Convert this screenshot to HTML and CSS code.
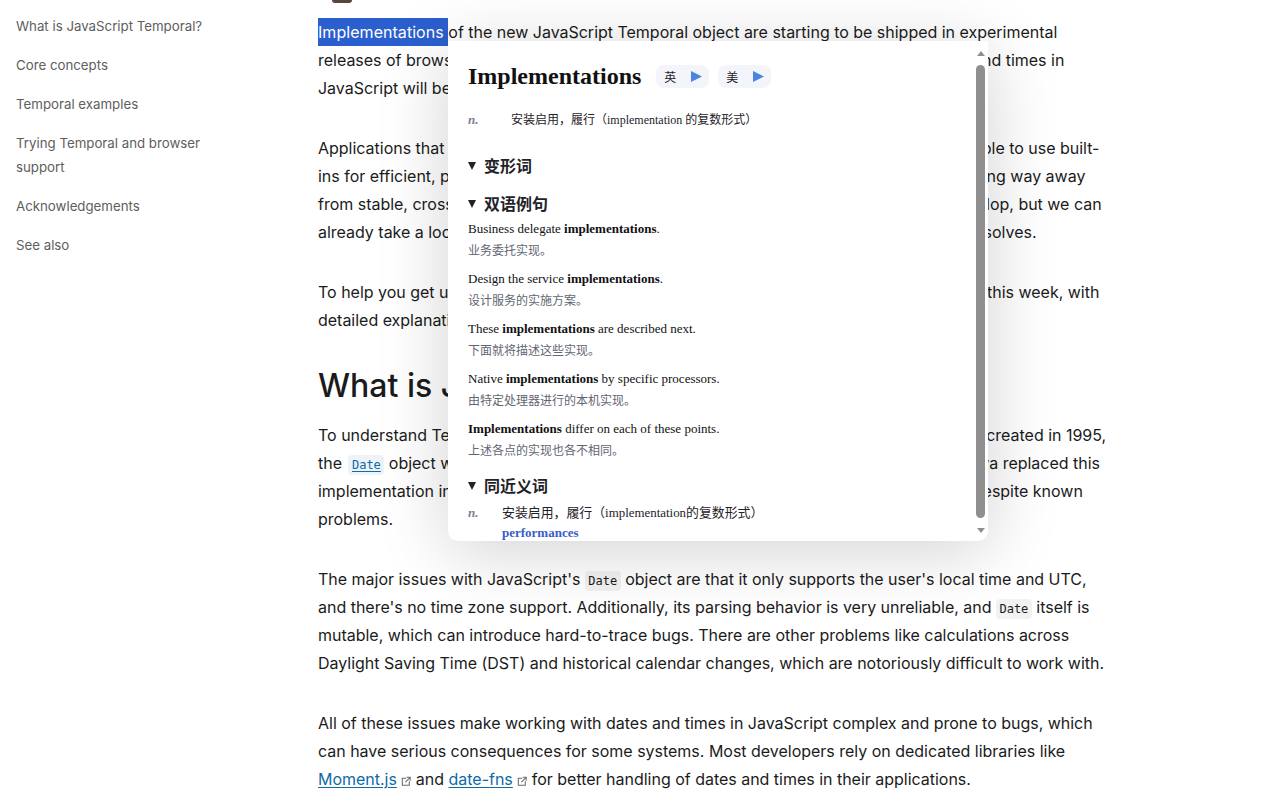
FILE: index.html
```html
<!DOCTYPE html>
<html lang="en">
<head>
<meta charset="utf-8">
<title>JavaScript Temporal is coming</title>
<link rel="stylesheet" href="styles.css">
</head>
<body>
<div class="page">
  <nav class="toc">
    <a href="#">What is JavaScript Temporal?</a>
    <a href="#">Core concepts</a>
    <a href="#">Temporal examples</a>
    <a href="#">Trying Temporal and browser support</a>
    <a href="#">Acknowledgements</a>
    <a href="#">See also</a>
  </nav>
  <main class="article">
    <div class="hero"><div class="hero-shape"></div></div>
    <p><span class="selected">Implementations </span>of the new JavaScript Temporal object are starting to be shipped in experimental releases of browsers. This is great news for web developers, since working with dates and times in JavaScript will be hugely simplified and modernized.</p>
    <p>Applications that rely on scheduling, internationalization, or time-sensitive logic will be able to use built-ins for efficient, precise and consistent dates, times, durations, and calendars. We're a long way away from stable, cross-browser support, and things can yet change as implementations develop, but we can already take a look at Temporal, as it stands today, why it's exciting, and the problems it solves.</p>
    <p>To help you get up to speed, this post covers the basic concepts that landed in our docs this week, with detailed explanations and examples.</p>
    <h2>What is JavaScript Temporal?</h2>
    <p class="after-heading">To understand Temporal, we can look at JavaScript's Date object. When JavaScript was created in 1995, the <a href="#"><code class="code-link">Date</code></a> object was faithfully copied from Java's early java.util.Date implementation. Java replaced this implementation in 1997, and JavaScript is stuck with the same API for almost 30 years, despite known problems.</p>
    <p>The major issues with JavaScript's <code>Date</code> object are that it only supports the user's local time and UTC, and there's no time zone support. Additionally, its parsing behavior is very unreliable, and <code>Date</code> itself is mutable, which can introduce hard-to-trace bugs. There are other problems like calculations across Daylight Saving Time (DST) and historical calendar changes, which are notoriously difficult to work with.</p>
    <p>All of these issues make working with dates and times in JavaScript complex and prone to bugs, which can have serious consequences for some systems. Most developers rely on dedicated libraries like <a href="#">Moment.js</a><svg class="ext" viewBox="0 0 12 12"><path d="M6 2.5H1.5v8h8V6M6.5 1.5h4v4M10.5 1.5 5 7"/></svg> and <a href="#">date-fns</a><svg class="ext" viewBox="0 0 12 12"><path d="M6 2.5H1.5v8h8V6M6.5 1.5h4v4M10.5 1.5 5 7"/></svg> for better handling of dates and times in their applications.</p>
  </main>
</div>

<aside class="popup">
  <div class="popup-body">
    <div class="word-row">
      <h1 class="word">Implementations</h1>
      <span class="pill">英<svg class="play" viewBox="0 0 11 11"><path d="M0 0 11 5.5 0 11z"/></svg></span>
      <span class="pill">美<svg class="play" viewBox="0 0 11 11"><path d="M0 0 11 5.5 0 11z"/></svg></span>
    </div>
    <div class="def def-main"><i class="pos">n.</i><span>安装启用，履行（implementation 的复数形式）</span></div>
    <h3 class="sec sec-first"><span class="tri"></span>变形词</h3>
    <h3 class="sec sec-second"><span class="tri"></span>双语例句</h3>
    <div class="ex"><div class="en">Business delegate <b>implementations</b>.</div><div class="zh">业务委托实现。</div></div>
    <div class="ex"><div class="en">Design the service <b>implementations</b>.</div><div class="zh">设计服务的实施方案。</div></div>
    <div class="ex"><div class="en">These <b>implementations</b> are described next.</div><div class="zh">下面就将描述这些实现。</div></div>
    <div class="ex"><div class="en">Native <b>implementations</b> by specific processors.</div><div class="zh">由特定处理器进行的本机实现。</div></div>
    <div class="ex"><div class="en"><b>Implementations</b> differ on each of these points.</div><div class="zh">上述各点的实现也各不相同。</div></div>
    <h3 class="sec sec-syn"><span class="tri"></span>同近义词</h3>
    <div class="def def-syn"><i class="pos">n.</i><span>安装启用，履行（implementation的复数形式）<a class="syn" href="#">performances</a></span></div>
  </div>
  <div class="scrollbar">
    <span class="arrow arrow-up"></span>
    <span class="thumb"></span>
    <span class="arrow arrow-down"></span>
  </div>
</aside>
</body>
</html>
```

FILE: styles.css
```css
* { box-sizing: border-box; }
html, body { margin: 0; height: 800px; overflow: hidden; background: #fff; }
body { font-family: Inter, "Liberation Sans", sans-serif; color: #1b1b1b; position: relative; }
.page { display: flex; align-items: flex-start; }

.toc { width: 318px; flex: none; padding: 14px 0 0 16px; display: flex; flex-direction: column; gap: 15px; }
.toc a { width: 200px; font-size: 13.28px; line-height: 24px; color: #5e5e5e; text-decoration: none; }

.article { width: 792px; flex: none; font-size: 16px; line-height: 28px; letter-spacing: -0.015px; }
.hero { height: 18px; overflow: hidden; }
.hero-shape { width: 20px; height: 3px; margin-left: 14px; background: #5b4438; border-radius: 0 0 10px 10px; }
.article p { margin: 0 0 32px; }
.article h2 { margin: 0; height: 40px; font-size: 32px; line-height: 40px; font-weight: 500; letter-spacing: 0; }
.article p.after-heading { margin-top: 15px; }
.article a { color: #0f6aa6; text-decoration: underline; text-underline-offset: 2px; }
.selected { background: #2b5fcf; color: #fff; display: inline-block; white-space: pre; letter-spacing: 0.05px; }
code { font-family: "DejaVu Sans Mono", "Liberation Mono", monospace; font-size: 12px; line-height: 1; background: #f2f2f2; border-radius: 4px; padding: 3px 3.5px; }
code.code-link { background: #eef3f7; margin-left: 2px; }
.ext { width: 10.5px; height: 10.5px; margin-left: 4px; vertical-align: -1px; fill: none; stroke: #6b6b6b; stroke-width: 1.2; }

.popup { position: absolute; left: 448px; top: 41px; width: 540px; height: 500px; background: #fff; border-radius: 0 0 10px 10px; box-shadow: 0 10px 70px rgba(0, 0, 0, .18); overflow: hidden; font-family: "Liberation Serif", "Noto Sans CJK SC", serif; color: #1f2329; }
.popup-body { padding: 21px 40px 0 20px; }
.word-row { display: flex; align-items: center; height: 28px; }
.word { margin: 0 15px 0 0; font-size: 24px; line-height: 28px; font-weight: 700; color: #111; }
.pill { display: flex; align-items: center; justify-content: space-between; width: 53px; height: 23px; margin-right: 9px; padding: 0 7px 0 8px; background: #f3f5fa; border-radius: 8px; font-family: "Noto Sans CJK SC", sans-serif; font-size: 12px; }
.play { width: 11px; height: 11px; fill: #4a86e0; }

.def { display: flex; line-height: 20px; }
.pos { font-size: 13px; font-weight: 700; color: #7b8494; font-family: "Liberation Serif", serif; }
.def-main { margin-top: 20px; font-size: 12px; }
.def-main .pos { width: 43px; flex: none; }
.def-syn { font-size: 12.9px; }
.def-syn .pos { width: 34px; flex: none; }
.syn { display: block; font-size: 13px; font-weight: 700; line-height: 20px; color: #3a5cc9; text-decoration: none; }

.sec { display: flex; align-items: center; margin: 0; height: 24px; font-family: "Noto Sans CJK SC", sans-serif; font-size: 16px; font-weight: 700; color: #1f2329; }
.sec-first { margin-top: 23px; margin-bottom: 14px; }
.sec-second { margin-bottom: 4px; }
.sec-syn { margin-top: 12px; margin-bottom: 6px; }
.tri { width: 0; height: 0; margin: 1px 8px 0 0; border-left: 4.5px solid transparent; border-right: 4.5px solid transparent; border-top: 8px solid #1f2329; flex: none; }

.ex { margin-bottom: 8px; }
.ex .en { font-size: 13px; line-height: 20px; color: #111; }
.ex .zh { font-size: 12px; line-height: 22px; color: #5f6672; font-family: "Noto Sans CJK SC", sans-serif; }
.ex b { font-weight: 700; }

.scrollbar { position: absolute; right: 0; top: 0; width: 15px; height: 500px; display: flex; flex-direction: column; align-items: center; padding: 10px 0 0 0; }
.arrow { width: 0; height: 0; border-left: 4.5px solid transparent; border-right: 4.5px solid transparent; }
.arrow-up { border-bottom: 5px solid #8f8f8f; }
.arrow-down { border-top: 5px solid #8f8f8f; margin-top: 10px; }
.thumb { width: 9px; height: 453px; margin-top: 9px; border-radius: 5px; background: #8f8f8f; }
```
